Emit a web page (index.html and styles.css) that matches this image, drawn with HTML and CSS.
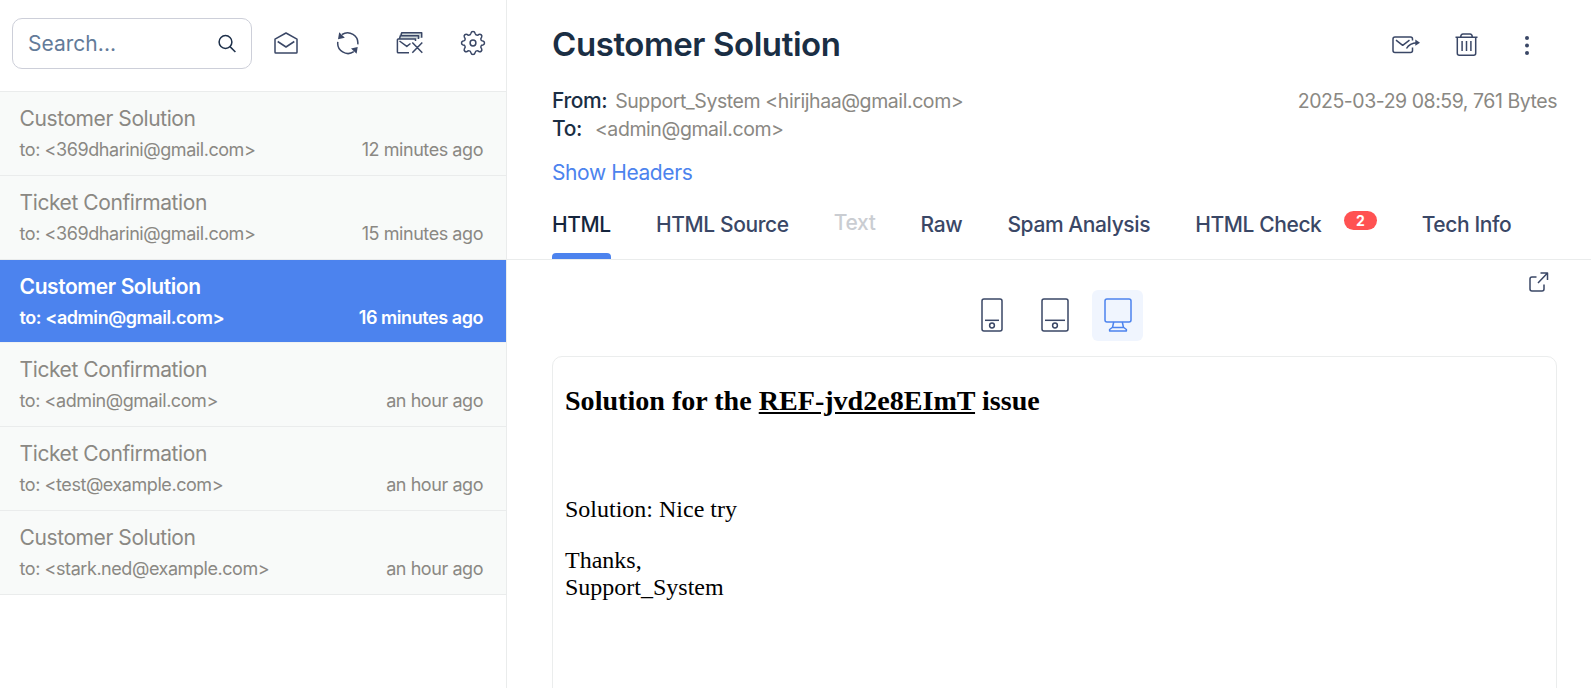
FILE: index.html
```
<!DOCTYPE html>
<html lang="en">
<head>
<meta charset="utf-8">
<title>Inbox</title>
<link rel="stylesheet" href="styles.css">
</head>
<body>
<div class="app">
  <aside class="sidebar">
    <div class="toolbar">
      <div class="search">
        <span class="search-text">Search...</span>
        <svg class="search-icon" width="20" height="20" viewBox="0 0 20 20"><circle cx="8.5" cy="8" r="6.4"/><path d="M13 12.6L18.4 18"/></svg>
      </div>
      <div class="tools">
        <svg class="read-icon" width="24" height="24" viewBox="0 0 24 24"><path d="M1 8.2L12 2L23 8.2V21.2Q23 22 22.2 22H1.8Q1 22 1 21.2Z"/><path d="M3.7 10.5L12 16L20.3 10.5"/></svg>
        <svg width="24" height="24" viewBox="0 0 24 24"><path d="M6 3.5A10.3 10.3 0 0 1 21.8 13.3M17.8 20.7A10.3 10.3 0 0 1 1.8 10.9"/><path class="fill" d="M3.2 1.3L8.8 6.7L2 8.2ZM21.7 16L20.6 22.8L15 17.5Z"/></svg>
        <svg width="28" height="24" viewBox="0 0 28 24"><path class="shade" d="M3 8V4.8L5 1.8H25V7M3 8L5 4.8H22V8H3"/><path d="M13 21.8H2.2Q1.4 21.8 1.4 21V8.8Q1.4 8 2.2 8H19.5V10M3.5 10L10.8 15.4L14.5 12.5M3.5 7.5L4.5 4.8H22.5V8M5 4.5L5.7 1.8H25.7V6.7M16.3 11.4L26.3 21.8M26.3 11.4L16.3 21.8"/></svg>
        <svg width="26" height="26" viewBox="0 0 26 26"><circle cx="13" cy="13" r="2.9"/><path d="M11 3.2Q11.3 1.5 13 1.5T15 3.2Q15.4 5.2 17.2 5.2Q18.2 5.2 19 4.4Q20.3 3.9 21.3 4.9T21.6 7.2Q20.4 8.6 21 10Q21.4 11 22.9 11Q24.5 11.4 24.5 13T22.9 15Q21.4 15 21 16Q20.4 17.4 21.6 18.8Q22.3 20.1 21.3 21.1T19 21.6Q18.2 20.8 17.2 20.8Q15.4 20.8 15 22.8Q14.7 24.5 13 24.5T11 22.8Q10.6 20.8 8.8 20.8Q7.8 20.8 7 21.6Q5.7 22.1 4.7 21.1T4.4 18.8Q5.6 17.4 5 16Q4.6 15 3.1 15Q1.5 14.6 1.5 13T3.1 11Q4.6 11 5 10Q5.6 8.6 4.4 7.2Q3.7 5.9 4.7 4.9T7 4.4Q7.8 5.2 8.8 5.2Q10.6 5.2 11 3.2Z"/></svg>
      </div>
    </div>
    <div class="message"><div class="subject">Customer Solution</div><div class="meta"><span>to: &lt;369dharini@gmail.com&gt;</span><span>12 minutes ago</span></div></div>
    <div class="message"><div class="subject">Ticket Confirmation</div><div class="meta"><span>to: &lt;369dharini@gmail.com&gt;</span><span>15 minutes ago</span></div></div>
    <div class="message selected"><div class="subject">Customer Solution</div><div class="meta"><span>to: &lt;admin@gmail.com&gt;</span><span>16 minutes ago</span></div></div>
    <div class="message"><div class="subject">Ticket Confirmation</div><div class="meta"><span>to: &lt;admin@gmail.com&gt;</span><span>an hour ago</span></div></div>
    <div class="message"><div class="subject">Ticket Confirmation</div><div class="meta"><span>to: &lt;test@example.com&gt;</span><span>an hour ago</span></div></div>
    <div class="message"><div class="subject">Customer Solution</div><div class="meta"><span>to: &lt;stark.ned@example.com&gt;</span><span>an hour ago</span></div></div>
  </aside>
  <main class="content">
    <header class="header">
      <div class="title-row">
        <h1 class="title">Customer Solution</h1>
        <div class="actions">
          <svg width="28" height="18" viewBox="0 0 28 18"><path d="M20.5 4.5V3Q20.5 1 18.5 1H3Q1 1 1 3V14.5Q1 16.5 3 16.5H18.5Q20.5 16.5 20.5 14.5V11.5M4 4.2L10.7 9.3L17.5 4.2M14.5 12.5Q17.5 7 25 6.7"/><path class="fill" d="M23.3 3.6L28 6.7L23.3 9.8Z"/></svg>
          <svg width="24" height="24" viewBox="0 0 24 24"><path d="M0.5 4.2H22.5M2.3 4.2V20.2Q2.3 22.2 4.3 22.2H18.7Q20.7 22.2 20.7 20.2V4.2M5.7 3.9Q5.9 1 8 1H15Q17.1 1 17.3 3.9M7.1 8V18M11.5 8V18M15.9 8V18"/></svg>
          <svg class="more-icon" width="6" height="21" viewBox="0 0 6 21"><g class="fill"><circle cx="3" cy="3" r="2"/><circle cx="3" cy="10.5" r="2"/><circle cx="3" cy="18" r="2"/></g></svg>
        </div>
      </div>
      <div class="info">
        <div><b class="label">From:</b><span class="from">Support_System &lt;hirijhaa@gmail.com&gt;</span></div>
        <div class="date">2025-03-29 08:59, 761 Bytes</div>
      </div>
      <div class="info"><div><b class="label">To:</b><span class="to">&lt;admin@gmail.com&gt;</span></div></div>
      <a class="show-headers">Show Headers</a>
    </header>
    <nav class="tabs">
      <span class="tab active">HTML</span>
      <span class="tab">HTML Source</span>
      <span class="tab disabled">Text</span>
      <span class="tab">Raw</span>
      <span class="tab">Spam Analysis</span>
      <span class="tab">HTML Check</span>
      <span class="badge">2</span>
      <span class="tab">Tech Info</span>
    </nav>
    <div class="preview-tools">
      <div class="devices">
        <span class="device"><svg width="22" height="34" viewBox="0 0 22 34"><rect x="1" y="1" width="20" height="32" rx="2"/><path d="M4 22.3H18"/><circle cx="11" cy="27.5" r="2.4"/></svg></span>
        <span class="device"><svg width="28" height="34" viewBox="0 0 28 34"><rect x="1" y="1" width="26" height="32" rx="2"/><path d="M4 22.3H24"/><circle cx="14" cy="27.5" r="2.4"/></svg></span>
        <span class="device on"><svg width="28" height="34" viewBox="0 0 28 34"><rect x="1" y="1" width="26" height="23" rx="2"/><path d="M9.7 24L8.5 29.5M18.3 24L19.5 29.5M8.2 29.5H19.8L22.4 31.5V33H5.6V31.5Z"/></svg></span>
      </div>
      <svg class="open" width="20" height="20" viewBox="0 0 20 20"><path d="M7.5 5H3Q1 5 1 7V17Q1 19 3 19H13Q15 19 15 17V12.5M11.5 1H18.5V8M18.5 1L9 11"/></svg>
    </div>
    <section class="mail">
      <h3 class="mail-heading">Solution for the <u>REF-jvd2e8EImT</u> issue</h3>
      <p class="mail-first">Solution: Nice try</p>
      <p class="mail-text">Thanks,<br>Support_System</p>
    </section>
  </main>
</div>
</body>
</html>
```
FILE: styles.css
```
* { box-sizing: border-box; }
body { margin: 0; background: #fff; font-family: Inter, sans-serif; color: #1a2b49; letter-spacing: -.42px; }
svg { display: block; flex: none; fill: none; stroke: #3a4766; stroke-width: 1.5; stroke-linejoin: round; }
.fill { fill: #3a4766; stroke: none; }
.shade { fill: #cdd6d8; stroke: none; }
.app { display: flex; width: 1591px; height: 688px; overflow: hidden; }
.sidebar { width: 507px; flex: none; border-right: 1px solid #eaecec; }
.toolbar { height: 92px; display: flex; align-items: flex-start; padding: 18px 20px 0 12px; border-bottom: 1px solid #eaecec; }
.search { width: 240px; height: 51px; flex: none; border: 1px solid #cdcfd9; border-radius: 10px; display: flex; align-items: center; justify-content: space-between; padding: 0 14px 0 15px; }
.search-text { font-size: 21px; color: #637b99; letter-spacing: .02px; }
.search-icon { stroke: #1d2f49; }
.tools { height: 49px; display: flex; align-items: center; gap: 36px; padding-left: 22px; }
.read-icon { margin-right: 2px; }
.message { height: 84px; padding: 14px 23px 0 19.6px; background: #f8faf9; border-bottom: 1px solid #eaecec; color: #8a8883; }
.subject { font-size: 21px; line-height: 26px; }
.meta { display: flex; justify-content: space-between; font-size: 18px; line-height: 24px; margin-top: 6px; letter-spacing: -.44px; }
.selected { height: 83px; background: #4c83ee; border-color: #f0f2f2; color: #fff; font-weight: 600; }
.content { flex: 1; min-width: 0; }
.header { height: 197px; padding: 22px 34px 0 45px; }
.title-row { height: 46px; display: flex; align-items: center; justify-content: space-between; }
.title { margin: 0; padding-bottom: 2px; font-size: 33px; line-height: 44px; font-weight: 600; color: #1a2e44; }
.actions { display: flex; align-items: center; gap: 35px; padding-right: 27px; }
.more-icon { margin-left: 10px; }
.info { display: flex; justify-content: space-between; font-size: 19.5px; line-height: 28px; color: #8a8883; }
.info:nth-child(2) { margin-top: 19px; }
.label { font-weight: 500; color: #1a2e44; font-size: 21px; }
.from { margin-left: 8px; }
.to { margin-left: 13px; }
.date { letter-spacing: -.46px; }
.show-headers { display: inline-block; margin-top: 16px; font-size: 21px; line-height: 28px; letter-spacing: -.4px; color: #4c83ee; }
.tabs { height: 63px; padding-left: 45px; display: flex; border-bottom: 1px solid #eaecec; font-size: 21px; font-weight: 500; letter-spacing: -.4px; color: #3a4766; }
.tab { height: 62px; padding-top: 14px; line-height: 28px; margin-right: 45.2px; white-space: nowrap; }
.active { color: #14253d; display: flex; flex-direction: column; justify-content: space-between; }
.active::after { content: ""; height: 6px; border-radius: 4px 4px 0 0; background: #4c83ee; }
.disabled { color: #cacdd2; padding-top: 12px; }
.badge { width: 33px; height: 19px; border-radius: 10px; margin: 14px 45px 0 -23px; background: #ff5252; color: #fff; font-size: 14px; line-height: 19px; font-weight: 700; text-align: center; }
.preview-tools { height: 96px; padding: 12px 42px 0 0; display: flex; justify-content: space-between; }
.devices { display: flex; padding: 18px 0 0 459px; gap: 12px; }
.device { width: 51px; height: 51px; padding-bottom: 2px; border-radius: 6px; display: flex; align-items: center; justify-content: center; }
.on { background: #f0f5fe; }
.on svg { stroke: #4c83ee; }
.mail { height: 400px; margin: 0 34px 0 45px; border: 1px solid #ebeded; border-radius: 10px; padding: 28px 12px; font: 24px/27px "Liberation Serif", serif; letter-spacing: 0; color: #000; }
.mail-heading { margin: 0; font-size: 28.08px; line-height: 32px; }
.mail-first { margin: 79px 0 24px; }
.mail-text { margin: 0; }
```
